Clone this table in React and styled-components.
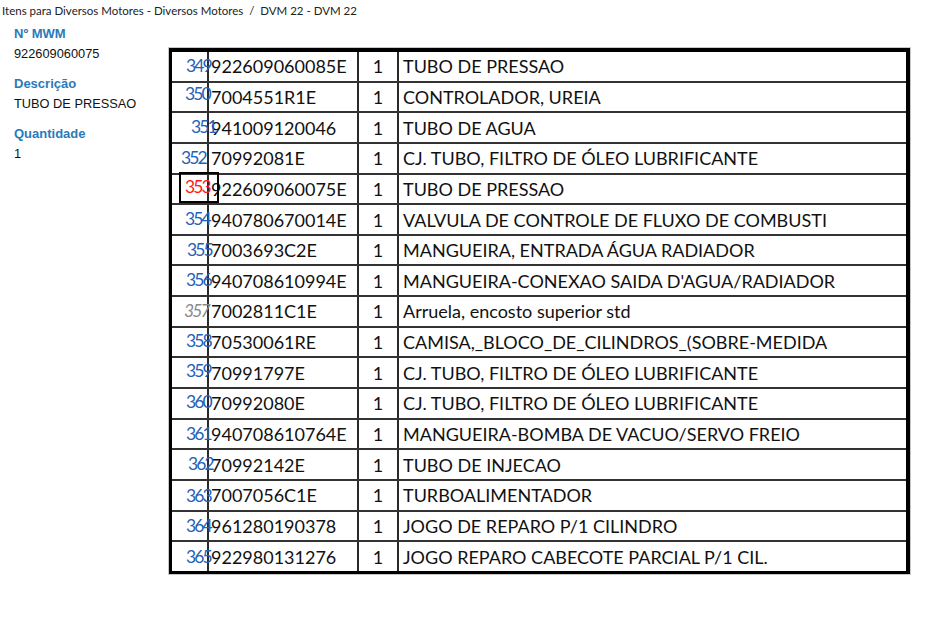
import React from 'react';
import styled, { createGlobalStyle } from 'styled-components';

const GlobalStyle = createGlobalStyle`
  html, body {
    margin: 0;
    padding: 0;
    background: #fff;
  }
`;

const rows = [
  { n: '349', off: 14, up: 0, code: '922609060085E', desc: 'TUBO DE PRESSAO' },
  { n: '350', off: 13, up: 3, code: '7004551R1E', desc: 'CONTROLADOR, UREIA' },
  { n: '351', off: 19, up: 0, code: '941009120046', desc: 'TUBO DE AGUA' },
  { n: '352', off: 9, up: 0, code: '70992081E', desc: 'CJ. TUBO, FILTRO DE ÓLEO LUBRIFICANTE' },
  { n: '353', off: 13, up: 0, code: '922609060075E', desc: 'TUBO DE PRESSAO', active: true },
  { n: '354', off: 13, up: 0, code: '940780670014E', desc: 'VALVULA DE CONTROLE DE FLUXO DE COMBUSTI' },
  { n: '355', off: 15, up: 0, code: '7003693C2E', desc: 'MANGUEIRA, ENTRADA ÁGUA RADIADOR' },
  { n: '356', off: 14, up: 0, code: '940708610994E', desc: "MANGUEIRA-CONEXAO SAIDA D'AGUA/RADIADOR" },
  { n: '357', off: 12, up: 0, code: '7002811C1E', desc: 'Arruela, encosto superior std', muted: true },
  { n: '358', off: 14, up: 1, code: '70530061RE', desc: 'CAMISA,_BLOCO_DE_CILINDROS_(SOBRE-MEDIDA' },
  { n: '359', off: 14, up: 1, code: '70991797E', desc: 'CJ. TUBO, FILTRO DE ÓLEO LUBRIFICANTE' },
  { n: '360', off: 14, up: 1, code: '70992080E', desc: 'CJ. TUBO, FILTRO DE ÓLEO LUBRIFICANTE' },
  { n: '361', off: 14, up: 0, code: '940708610764E', desc: 'MANGUEIRA-BOMBA DE VACUO/SERVO FREIO' },
  { n: '362', off: 16, up: 0, code: '70992142E', desc: 'TUBO DE INJECAO' },
  { n: '363', off: 14, up: -1, code: '7007056C1E', desc: 'TURBOALIMENTADOR' },
  { n: '364', off: 14, up: 0, code: '961280190378', desc: 'JOGO DE REPARO P/1 CILINDRO' },
  { n: '365', off: 14, up: -1, code: '922980131276', desc: 'JOGO REPARO CABECOTE PARCIAL P/1 CIL.' },
];

export default function App() {
  return (
    <Page>
      <GlobalStyle />
      <Breadcrumb>Itens para Diversos Motores - Diversos Motores&nbsp;&nbsp;/&nbsp;&nbsp;DVM 22 - DVM 22</Breadcrumb>
      <Body>
        <Details>
          <Field>
            <Label>Nº MWM</Label>
            <Value>922609060075</Value>
          </Field>
          <Field>
            <Label>Descrição</Label>
            <Value>TUBO DE PRESSAO</Value>
          </Field>
          <Field>
            <Label>Quantidade</Label>
            <Value>1</Value>
          </Field>
        </Details>
        <Sheet>
          {rows.map((r, i) => (
            <Row key={r.n} $first={i === 0}>
              <NumCell>
                <Num $off={r.off} $up={r.up} $muted={r.muted} $active={r.active}>{r.n}</Num>
              </NumCell>
              <CodeCell>{r.code}</CodeCell>
              <QtyCell>1</QtyCell>
              <DescCell>{r.desc}</DescCell>
            </Row>
          ))}
        </Sheet>
      </Body>
    </Page>
  );
}

const Page = styled.div`
  width: 938px;
  height: 636px;
  background: #fff;
  overflow: hidden;
`;

const Breadcrumb = styled.div`
  font-family: Lato, "Open Sans", sans-serif;
  font-size: 11.5px;
  color: #222;
  height: 22px;
  line-height: 22px;
  padding-left: 2px;
  white-space: nowrap;
`;

const Body = styled.div`
  display: flex;
  align-items: flex-start;
`;

const Details = styled.div`
  width: 155px;
  padding-left: 14px;
  padding-top: 2px;
  display: flex;
  flex-direction: column;
  gap: 10px;
  font-family: "Liberation Sans", Arial, sans-serif;
`;

const Field = styled.div`
  display: flex;
  flex-direction: column;
`;

const Label = styled.div`
  font-size: 13px;
  font-weight: bold;
  color: #2a7ab9;
  line-height: 20px;
`;

const Value = styled.div`
  font-size: 12.8px;
  color: #111;
  line-height: 20px;
`;

const Sheet = styled.div`
  margin-top: 26px;
  width: 741px;
  height: 526px;
  box-sizing: border-box;
  border-style: solid;
  border-color: #000;
  border-width: 4px 4px 3px 3px;
  box-shadow: 0 0 0 1px #c8c8c8;
  display: flex;
  flex-direction: column;
  font-family: Lato, "Open Sans", sans-serif;
  font-size: 18px;
  color: #111;
`;

const Row = styled.div`
  flex: 1;
  display: grid;
  grid-template-columns: 37px 150px 40px 1fr;
  border-top: ${p => (p.$first ? 'none' : '2px solid #333')};
  min-height: 0;
`;

const Cell = styled.div`
  display: flex;
  align-items: center;
  white-space: nowrap;
  overflow: visible;
`;

const NumCell = styled(Cell)`
  position: relative;
  border-right: 2px solid #2a2a2a;
  z-index: 1;
`;

const Num = styled.span`
  position: absolute;
  left: ${p => (p.$active ? 7 : p.$off)}px;
  top: ${p => (p.$active ? -3 : 2 - p.$up)}px;
  font-family: Lato, "Open Sans", sans-serif;
  font-size: 17.5px;
  letter-spacing: -1.9px;
  line-height: 24px;
  color: ${p => (p.$active ? '#ff1a1a' : p.$muted ? '#8a8a8a' : '#1f62b8')};
  font-style: ${p => (p.$muted ? 'italic' : 'normal')};
  padding: ${p => (p.$active ? '1px 7px 2px 4px' : '0')};
  border: ${p => (p.$active ? '2px solid #000' : 'none')};
`;

const CodeCell = styled(Cell)`
  padding-left: 2px;
  border-right: 2px solid #2a2a2a;
`;

const QtyCell = styled(Cell)`
  justify-content: center;
  border-right: 2px solid #2a2a2a;
`;

const DescCell = styled(Cell)`
  padding-left: 4px;
`;
